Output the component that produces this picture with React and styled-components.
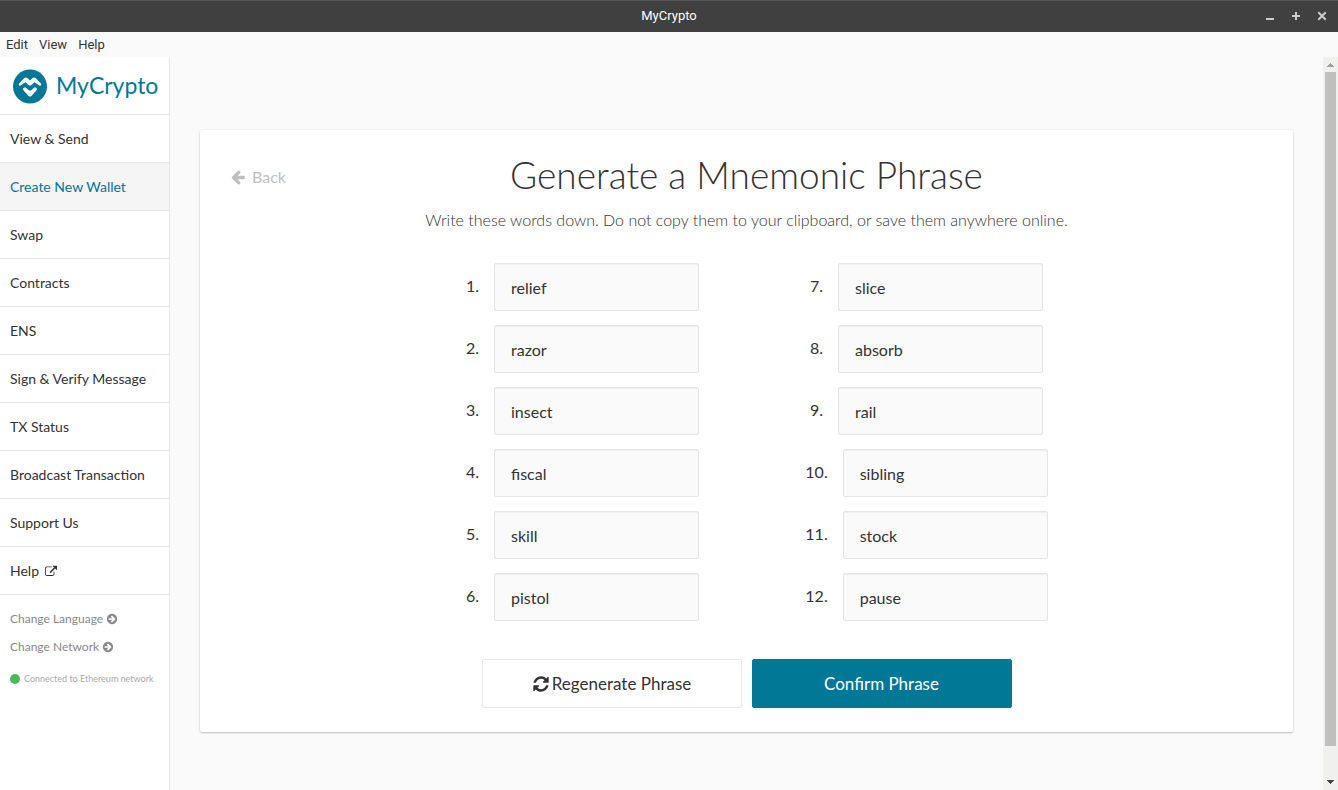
import React from 'react';
import styled, { createGlobalStyle, css } from 'styled-components';

const GlobalStyle = createGlobalStyle`
  *, *::before, *::after { box-sizing: border-box; }
  body { margin: 0; background: #fafafa; color: #333; font-family: Lato, sans-serif; font-size: 16px; }
  button, input { font-family: inherit; }
`;

const Window = styled.div`
  display: flex;
  flex-direction: column;
  min-height: 100vh;
`;

const TitleBar = styled.header`
  display: grid;
  grid-template-columns: 1fr auto 1fr;
  align-items: center;
  height: 32px;
  padding: 0 8px 1px;
  background: #404040;
  border-top: 1px solid #555;
  color: #fff;
  font: 400 13px/16px Roboto, sans-serif;
`;

const WindowControls = styled.div`
  grid-column: 3;
  display: flex;
  justify-content: flex-end;
  gap: 10px;
`;

const WindowButton = styled.button`
  width: 16px;
  height: 16px;
  padding: 0;
  border: 0;
  background: none;
  color: #ccc;
  svg { display: block; }
`;

const WindowTitle = styled.span`
  grid-column: 2;
`;

const MenuBar = styled.nav`
  display: flex;
  gap: 11px;
  height: 25px;
  padding: 0 6px;
  background: #fafafa;
`;

const MenuButton = styled.button`
  padding: 0;
  border: 0;
  background: none;
  color: #333;
  && { font: 400 13px/25px Roboto, sans-serif; }
`;

const Body = styled.div`
  display: flex;
  flex: 1;
`;

const Sidebar = styled.aside`
  flex: 0 0 170px;
  min-width: 0;
  background: #fff;
  border-right: 1px solid #e5e5e5;
`;

const Brand = styled.a`
  display: flex;
  align-items: center;
  gap: 8px;
  height: 58px;
  padding: 0 10px 0 12px;
  border-bottom: 1px solid #e5e5e5;
  color: #007896;
  font-size: 23px;
  line-height: 32px;
  text-decoration: none;
  svg { flex: none; }
`;

const BrandName = styled.span`
  padding-bottom: 2px;
`;

const NavLink = styled.a`
  display: flex;
  align-items: center;
  gap: 6px;
  height: 48px;
  padding: 0 10px;
  border-bottom: 1px solid #e5e5e5;
  background: ${p => (p.$active ? '#f5f5f5' : '#fff')};
  color: ${p => (p.$active ? '#007896' : '#333')};
  font-size: 14px;
  text-decoration: none;
`;

const SidebarFooter = styled.div`
  display: flex;
  flex-direction: column;
  align-items: flex-start;
  gap: 8px;
  padding: 14px 10px;
`;

const FooterButton = styled.button`
  display: flex;
  align-items: center;
  gap: 3px;
  padding: 0;
  border: 0;
  background: none;
  color: #888;
  font-size: 12px;
  line-height: 20px;
`;

const Status = styled.div`
  display: flex;
  align-items: center;
  gap: 4px;
  padding-top: 6px;
  color: #aaa;
  font-size: 9px;
  line-height: 16px;
  white-space: nowrap;
  &::before {
    content: '';
    width: 10px;
    height: 10px;
    border-radius: 50%;
    background: #4fb85f;
  }
`;

const Main = styled.main`
  flex: 1;
  padding: 73px 30px 30px;
`;

const Card = styled.section`
  padding: 24px 30px;
  background: #fff;
  border-radius: 2px;
  box-shadow: 0 1px 2px rgba(0, 0, 0, 0.22), 0 0 3px rgba(0, 0, 0, 0.07);
`;

const CardHeader = styled.div`
  display: grid;
  grid-template-columns: 1fr auto 1fr;
  align-items: start;
`;

const BackButton = styled.button`
  display: flex;
  align-items: center;
  justify-self: start;
  gap: 6px;
  padding: 11px 0;
  border: 0;
  background: none;
  color: #bfbfbf;
  font-size: 16px;
  line-height: 24px;
`;

const Title = styled.h1`
  margin: 0;
  font-size: 37px;
  font-weight: 300;
  line-height: 42px;
`;

const Intro = styled.p`
  margin: 8px 0 31px;
  font-size: 16px;
  font-weight: 300;
  line-height: 24px;
  text-align: center;
`;

const Words = styled.div`
  display: flex;
  justify-content: center;
  padding-left: 16px;
`;

const WordColumn = styled.div`
  display: flex;
  flex-direction: column;
  align-items: center;
  gap: 14px;
  flex: 0 1 344px;
`;

const WordRow = styled.div`
  display: flex;
  align-items: center;
  gap: 15px;
`;

const WordLabel = styled.label`
  padding-bottom: 2px;
  line-height: 20px;
`;

const WordInput = styled.input`
  width: 205px;
  height: 48px;
  padding: 0 16px;
  border: 1px solid #e5e5e5;
  border-radius: 2px;
  background: #fafafa;
  box-shadow: inset 0 1px 1px rgba(0, 0, 0, 0.05);
  color: #333;
  font-size: 16px;
`;

const Actions = styled.div`
  display: flex;
  justify-content: center;
  gap: 10px;
  margin-top: 38px;
`;

const ActionButton = styled.button`
  display: flex;
  align-items: center;
  justify-content: center;
  gap: 2px;
  width: 260px;
  height: 49px;
  border: 1px solid #e5e9ed;
  border-radius: 2px;
  background: #fff;
  color: #333;
  font-size: 17px;
  ${p => p.$primary && css`
    border-color: #007896;
    background: #007896;
    color: #fff;
  `}
`;

const ScrollTrack = styled.div`
  display: flex;
  flex-direction: column;
  flex: 0 0 15px;
  align-items: center;
  background: #f0f0ee;
`;

const ScrollArrow = styled.svg`
  width: 15px;
  height: 15px;
`;

const ScrollThumb = styled.div`
  flex: 674;
  width: 11px;
  background: #bfbfbf;
`;

const ScrollRest = styled.div`
  flex: 29;
`;

const ICONS = {
  back: 'M1664 896v128q0 53-32.5 90.5t-84.5 37.5h-704l293 294q38 36 38 90t-38 90l-75 76q-37 37-90 37-52 0-91-37l-651-652q-37-37-37-90 0-52 37-91l651-650q38-38 91-38 52 0 90 38l75 74q38 38 38 91t-38 91l-293 293h704q52 0 84.5 37.5t32.5 90.5z',
  refresh: 'M1639 1056q0 5-1 7-64 268-268 434.5t-478 166.5q-146 0-282.5-55t-243.5-157l-129 129q-19 19-45 19t-45-19-19-45v-448q0-26 19-45t45-19h448q26 0 45 19t19 45-19 45l-137 137q71 66 161 102t187 36q134 0 250-65t186-179q11-17 53-117 8-23 30-23h192q13 0 22.5 9.5t9.5 22.5zm25-800v448q0 26-19 45t-45 19h-448q-26 0-45-19t-19-45 19-45l138-138q-148-137-349-137-134 0-250 65t-186 179q-11 17-53 117-8 23-30 23h-199q-13 0-22.5-9.5t-9.5-22.5v-7q65-268 270-434.5t480-166.5q146 0 284 55.5t245 156.5l130-129q19-19 45-19t45 19 19 45z',
  external: 'M1408 928v320q0 119-84.5 203.5t-203.5 84.5h-832q-119 0-203.5-84.5t-84.5-203.5v-832q0-119 84.5-203.5t203.5-84.5h704q14 0 23 9t9 23v64q0 14-9 23t-23 9h-704q-66 0-113 47t-47 113v832q0 66 47 113t113 47h832q66 0 113-47t47-113v-320q0-14 9-23t23-9h64q14 0 23 9t9 23zm384-864v512q0 26-19 45t-45 19-45-19l-176-176-652 652q-10 10-23 10t-23-10l-114-114q-10-10-10-23t10-23l652-652-176-176q-19-19-19-45t19-45 45-19h512q26 0 45 19t19 45z',
  circleArrow: 'M1413 896q0-27-18-45l-91-91-362-362q-18-18-45-18t-45 18l-91 91q-18 18-18 45t18 45l189 189h-502q-26 0-45 19t-19 45v128q0 26 19 45t45 19h502l-189 189q-19 19-19 45t19 45l91 91q18 18 45 18t45-18l362-362 91-91q18-18 18-45zm251 0q0 209-103 385.5t-279.5 279.5-385.5 103-385.5-103-279.5-279.5-103-385.5 103-385.5 279.5-279.5 385.5-103 385.5 103 279.5 279.5 103 385.5z',
};

const Icon = ({ name, size, box = '0 0 1792 1792' }) => (
  <svg width={size} height={size} viewBox={box} fill="currentColor" aria-hidden="true">
    <path d={ICONS[name]} />
  </svg>
);

const LogoMark = () => (
  <svg width="36" height="36" viewBox="0 0 36 36" aria-hidden="true">
    <circle cx="18" cy="18.500" r="17" fill="#007896" />
    <g fill="#fff">
      <path d="M6.800 15.800L12.200 10.200Q14 8.800 15.700 10.200L18 12.400L20.300 10.200Q22 8.800 23.800 10.200L29.200 15.800Q29.800 18 27.400 17.600L22.600 14.200L19.400 17Q18 18 16.600 17L13.400 14.200L8.600 17.600Q6.200 18 6.800 15.800Z" />
      <path d="M11 21Q11.200 18.800 13.600 19.600L16.800 22.200Q18 23 19.200 22.200L22.400 19.600Q24.800 18.800 25 21Q24.800 22.200 24 23L19.400 28Q18 29.200 16.600 28L12 23Q11.200 22.200 11 21Z" />
    </g>
  </svg>
);

const NAV = ['View & Send', 'Create New Wallet', 'Swap', 'Contracts', 'ENS', 'Sign & Verify Message', 'TX Status', 'Broadcast Transaction', 'Support Us', 'Help'];
const WORDS = ['relief', 'razor', 'insect', 'fiscal', 'skill', 'pistol', 'slice', 'absorb', 'rail', 'sibling', 'stock', 'pause'];

export default function App() {
  return (
    <Window>
      <GlobalStyle />
      <TitleBar>
        <WindowTitle>MyCrypto</WindowTitle>
        <WindowControls>
          <WindowButton aria-label="Minimize">
            <svg width="16" height="16"><path d="M4 10h8v2H4z" fill="currentColor" /></svg>
          </WindowButton>
          <WindowButton aria-label="Maximize">
            <svg width="16" height="16"><path d="M7 4h2v3h3v2H9v3H7V9H4V7h3z" fill="currentColor" /></svg>
          </WindowButton>
          <WindowButton aria-label="Close">
            <svg width="16" height="16"><path d="M5 5l6 6M11 5l-6 6" stroke="currentColor" strokeWidth="2" strokeLinecap="square" /></svg>
          </WindowButton>
        </WindowControls>
      </TitleBar>
      <MenuBar>
        {['Edit', 'View', 'Help'].map(m => <MenuButton key={m}>{m}</MenuButton>)}
      </MenuBar>
      <Body>
        <Sidebar>
          <Brand href="#"><LogoMark /><BrandName>MyCrypto</BrandName></Brand>
          <nav>
            {NAV.map((item, i) => (
              <NavLink key={item} href="#" $active={i === 1}>
                {item}
                {item === 'Help' && <Icon name="external" size={12} box="0 -96 1792 1792" />}
              </NavLink>
            ))}
          </nav>
          <SidebarFooter>
            <FooterButton>Change Language <Icon name="circleArrow" size={12} /></FooterButton>
            <FooterButton>Change Network <Icon name="circleArrow" size={12} /></FooterButton>
            <Status>Connected to Ethereum network</Status>
          </SidebarFooter>
        </Sidebar>
        <Main>
          <Card>
            <CardHeader>
              <BackButton><Icon name="back" size={16} />Back</BackButton>
              <Title>Generate a Mnemonic Phrase</Title>
            </CardHeader>
            <Intro>Write these words down. Do not copy them to your clipboard, or save them anywhere online.</Intro>
            <Words>
              {[0, 6].map(start => (
                <WordColumn key={start}>
                  {WORDS.slice(start, start + 6).map((word, i) => (
                    <WordRow key={word}>
                      <WordLabel htmlFor={`word-${start + i + 1}`}>{start + i + 1}.</WordLabel>
                      <WordInput id={`word-${start + i + 1}`} value={word} readOnly />
                    </WordRow>
                  ))}
                </WordColumn>
              ))}
            </Words>
            <Actions>
              <ActionButton><Icon name="refresh" size={18} />Regenerate Phrase</ActionButton>
              <ActionButton $primary>Confirm Phrase</ActionButton>
            </Actions>
          </Card>
        </Main>
        <ScrollTrack>
          <ScrollArrow><path d="M7 6h1v1h1v1h1v1h1v1H4V9h1V8h1V7h1z" fill="#a0a0a0" /></ScrollArrow>
          <ScrollThumb />
          <ScrollRest />
          <ScrollArrow><path d="M4 5h7v1h-1v1H9v1H8v1H7V8H6V7H5V6H4z" fill="#444" /></ScrollArrow>
        </ScrollTrack>
      </Body>
    </Window>
  );
}
